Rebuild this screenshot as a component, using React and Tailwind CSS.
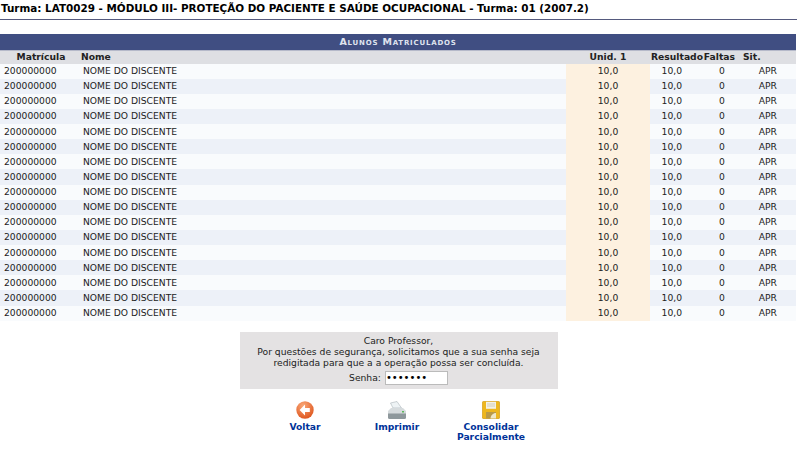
import { useState } from 'react';

const rows = Array.from({ length: 17 }, (_, i) => i);

function BackIcon() {
  return (
    <svg width="18" height="18" viewBox="0 0 18 18">
      <defs>
        <radialGradient id="back" cx="0.4" cy="0.25" r="0.85">
          <stop offset="0" stopColor="#f9a878" />
          <stop offset="1" stopColor="#dc4d14" />
        </radialGradient>
      </defs>
      <circle cx="9" cy="9" r="8.7" fill="url(#back)" />
      <path d="M9 3.6 3.6 9 9 14.4v-3.3h4.8V6.9H9z" fill="#fff" />
    </svg>
  );
}

function PrintIcon() {
  return (
    <svg width="20" height="19" viewBox="0 0 20 19">
      <path d="M3.5 2 10 0.5l4.5 6.5H6z" fill="#eef3f5" stroke="#a9b4b8" strokeWidth="0.6" />
      <path d="M1 10l3-3h12l3 3v4H1z" fill="#d6dbdd" />
      <path d="M1 12.5h18v4a1.5 1.5 0 0 1-1.5 1.5h-15A1.5 1.5 0 0 1 1 16.5z" fill="#8e989c" />
      <rect x="15" y="10" width="2" height="1.5" fill="#5cb85c" />
    </svg>
  );
}

function SaveIcon() {
  return (
    <svg width="18" height="18" viewBox="0 0 18 18">
      <rect x="0.3" y="0.3" width="17.4" height="17.4" rx="1.5" fill="#eeb71e" stroke="#c9920f" strokeWidth="0.6" />
      <rect x="4" y="0.8" width="10" height="7" fill="#f3f1e6" />
      <path d="M5 3h8M5 5h8" stroke="#c9c5ad" strokeWidth="0.8" />
      <path d="M4 17.5V11h10v6.5z" fill="#b89a4a" />
      <path d="M8.5 17.5c0-3 2.5-5.5 5.5-5.5v5.5z" fill="#efe7c8" />
    </svg>
  );
}

function Action({ icon, children, width }) {
  return (
    <a className={`flex flex-col items-center text-center font-bold text-[#003399] leading-[10.5px] ${width}`}>
      <span className="h-[21px] flex items-center justify-center mb-[1px]">{icon}</span>
      {children}
    </a>
  );
}

export default function App() {
  const [senha, setSenha] = useState('1234567');

  return (
    <div className="w-[800px] h-[456px] overflow-hidden bg-white text-[#222] text-[9.2px] font-['DejaVu_Sans',sans-serif]">
      <h2 className="h-[20px] pt-[2px] pl-[1px] mr-[3px] border-b border-[#555a7e] text-[10.4px] leading-[13px] font-bold text-black whitespace-nowrap">
        Turma: LAT0029 - MÓDULO III- PROTEÇÃO DO PACIENTE E SAÚDE OCUPACIONAL - Turma: 01 (2007.2)
      </h2>

      <table className="mt-[14px] w-[796px] table-fixed border-collapse border-t border-[#b5b9c9]">
        <caption className="h-[16px] bg-[#404e82] text-[#dfe3ee] font-bold text-[9.5px] leading-[16px] tracking-[0.8px] text-center [font-variant-caps:small-caps]">
          Alunos Matriculados
        </caption>
        <thead>
          <tr className="h-[13px] bg-[#dedfe3] text-[#222] font-bold leading-[12px]">
            <th className="w-[81px] pl-[1px] text-center font-bold">Matrícula</th>
            <th className="w-[485px] text-left font-bold">Nome</th>
            <th className="w-[84px] text-center font-bold">Unid. 1</th>
            <th className="w-[53px] text-right font-bold">Resultado</th>
            <th className="w-[35px] pr-[3px] text-right font-bold">Faltas</th>
            <th className="font-bold text-left pl-[5px]">Sit.</th>
          </tr>
        </thead>
        <tbody>
          {rows.map((i) => (
            <tr key={i} className={`h-[15.125px] leading-[12px] ${i % 2 === 0 ? 'bg-[#f9fbfd]' : 'bg-[#edf1f8]'}`}>
              <td className="pl-[4px]">200000000</td>
              <td className="pl-[2px]">NOME DO DISCENTE</td>
              <td className="text-center bg-[#fdf1e0]">10,0</td>
              <td className="text-right pr-[21px]">10,0</td>
              <td className="text-center pl-[3px]">0</td>
              <td className="text-right pr-[19px]">APR</td>
            </tr>
          ))}
        </tbody>
      </table>

      <div className="flex justify-center pr-[3px] mt-[11px]">
        <div className="w-[318px] h-[57px] bg-[#e4e2e3] pt-[3px] text-center leading-[11px]">
          <p>Caro Professor,</p>
          <p>Por questões de segurança, solicitamos que a sua senha seja</p>
          <p>redigitada para que a a operação possa ser concluída.</p>
          <label className="flex items-center justify-center gap-[4px] mt-[3px]">
            Senha:
            <input
              type="password"
              value={senha}
              onChange={(e) => setSenha(e.target.value)}
              className="w-[63px] h-[14px] bg-white border border-[#bbb] px-0 text-[10px] text-black outline-none"
            />
          </label>
        </div>
      </div>

      <div className="flex items-start mt-[11px] ml-[265px]">
        <Action icon={<BackIcon />} width="w-[80px]">Voltar</Action>
        <Action icon={<PrintIcon />} width="w-[66px] ml-[19px]">Imprimir</Action>
        <Action icon={<SaveIcon />} width="w-[80px] ml-[21px]">Consolidar<br />Parcialmente</Action>
      </div>
    </div>
  );
}
